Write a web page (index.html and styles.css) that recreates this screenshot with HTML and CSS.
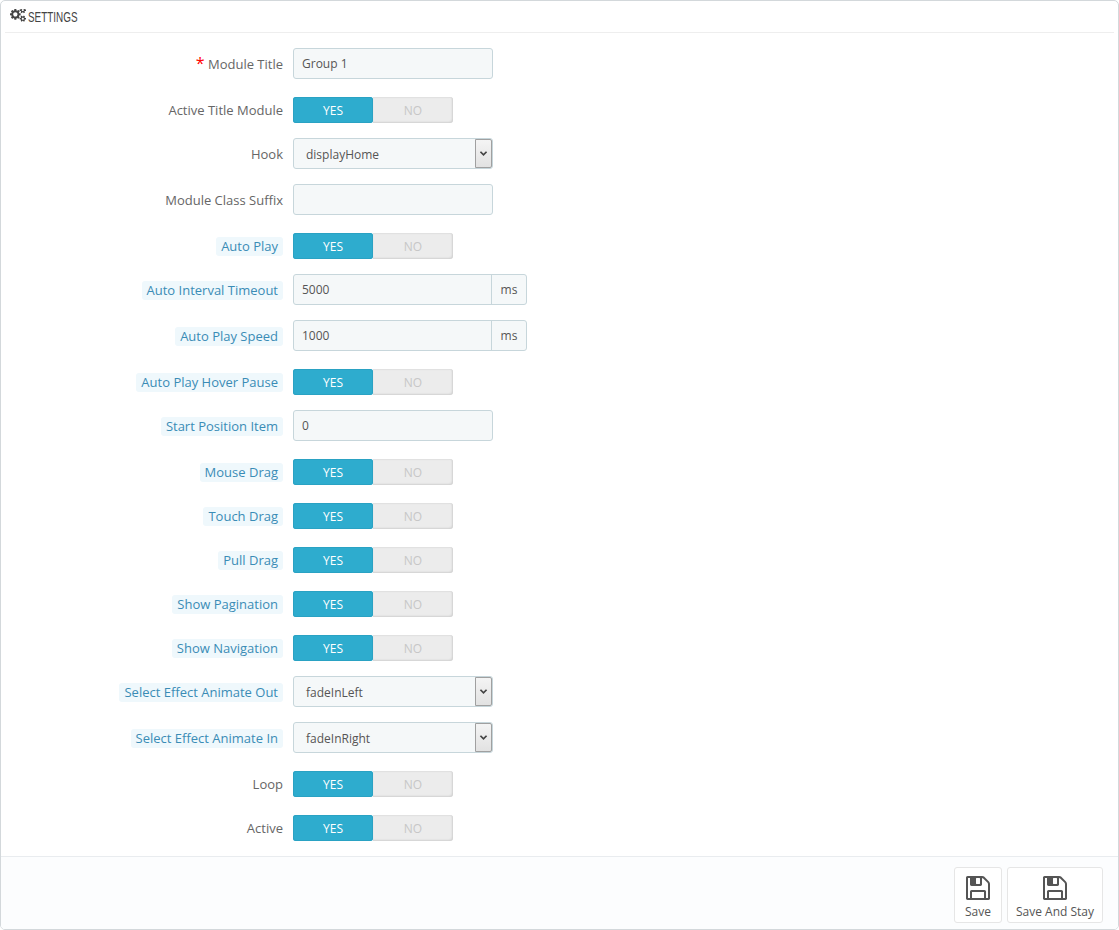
FILE: index.html
```html
<!DOCTYPE html>
<html lang="en">
<head>
<meta charset="utf-8">
<title>Settings</title>
<link rel="stylesheet" href="styles.css">
</head>
<body>
<div class="panel">
  <h3 class="panel-heading">
    <svg class="gears" viewBox="0 0 1920 1792"><path fill="currentColor" d="M896 640q0-106-75-181t-181-75-181 75-75 181 75 181 181 75 181-75 75-181zm768 512q0-52-38-90t-90-38-90 38-38 90q0 53 37.500 90.500t90.500 37.500 90.500-37.500 37.500-90.500zm0-1024q0-52-38-90t-90-38-90 38-38 90q0 53 37.500 90.500t90.500 37.500 90.500-37.500 37.500-90.500zm-384 421v185q0 10-7 19.500t-16 10.500l-155 24q-11 35-32 76 34 48 90 115 7 11 7 20 0 12-7 19-23 30-82.500 89.500t-78.500 59.500q-11 0-21-7l-115-90q-37 19-77 31-11 108-23 155-7 24-30 24h-186q-11 0-20-7.500t-10-17.500l-23-153q-34-10-75-31l-118 89q-7 7-20 7-11 0-21-8-144-133-144-160 0-9 7-19 10-14 41-53t47-61q-23-44-35-82l-152-24q-10-1-17-9.500t-7-19.500v-185q0-10 7-19.500t16-10.500l155-24q11-35 32-76-34-48-90-115-7-11-7-20 0-12 7-20 22-30 82-89t79-59q11 0 21 7l115 90q34-18 77-32 11-108 23-154 7-24 30-24h186q11 0 20 7.500t10 17.500l23 153q34 10 75 31l118-89q8-7 20-7 11 0 21 8 144 133 144 160 0 8-7 19-12 16-42 54t-45 60q23 48 34 82l152 23q10 2 17 10.500t7 19.500zm640 533v140q0 16-149 31-12 27-30 52 51 113 51 138 0 4-4 7-122 71-124 71-8 0-46-47t-52-68q-20 2-30 2t-30-2q-14 21-52 68t-46 47q-2 0-124-71-4-3-4-7 0-25 51-138-18-25-30-52-149-15-149-31v-140q0-16 149-31 13-29 30-52-51-113-51-138 0-4 4-7 4-2 35-20t59-34 30-16q8 0 46 46.500t52 67.500q20-2 30-2t30 2q51-71 92-112l6-2q4 0 124 70 4 3 4 7 0 25-51 138 17 23 30 52 149 15 149 31zm0-1024v140q0 16-149 31-12 27-30 52 51 113 51 138 0 4-4 7-122 71-124 71-8 0-46-47t-52-68q-20 2-30 2t-30-2q-14 21-52 68t-46 47q-2 0-124-71-4-3-4-7 0-25 51-138-18-25-30-52-149-15-149-31v-140q0-16 149-31 13-29 30-52-51-113-51-138 0-4 4-7 4-2 35-20t59-34 30-16q8 0 46 46.500t52 67.500q20-2 30-2t30 2q51-71 92-112l6-2q4 0 124 70 4 3 4 7 0 25-51 138 17 23 30 52 149 15 149 31z"/></svg>
    <span class="title">SETTINGS</span>
  </h3>
  <form class="form">
    <div class="row"><label class="label label-plain"><span class="req">*</span> Module Title</label><input class="input" value="Group 1"></div>
    <div class="row row-switch"><label class="label label-plain">Active Title Module</label><div class="switch"><span class="on">YES</span><span class="off">NO</span></div></div>
    <div class="row"><label class="label">Hook</label><div class="select"><span>displayHome</span><i class="arrow"><svg viewBox="0 0 10 8"><path d="M1.500 2 5 5.500 8.500 2" /></svg></i></div></div>
    <div class="row"><label class="label">Module Class Suffix</label><input class="input"></div>
    <div class="row row-switch"><label class="label"><span class="hint">Auto Play</span></label><div class="switch"><span class="on">YES</span><span class="off">NO</span></div></div>
    <div class="row"><label class="label"><span class="hint">Auto Interval Timeout</span></label><div class="group"><input class="group-input" value="5000"><span class="addon">ms</span></div></div>
    <div class="row"><label class="label"><span class="hint">Auto Play Speed</span></label><div class="group"><input class="group-input" value="1000"><span class="addon">ms</span></div></div>
    <div class="row row-switch"><label class="label"><span class="hint">Auto Play Hover Pause</span></label><div class="switch"><span class="on">YES</span><span class="off">NO</span></div></div>
    <div class="row"><label class="label"><span class="hint">Start Position Item</span></label><input class="input" value="0"></div>
    <div class="row row-switch"><label class="label"><span class="hint">Mouse Drag</span></label><div class="switch"><span class="on">YES</span><span class="off">NO</span></div></div>
    <div class="row row-switch"><label class="label"><span class="hint">Touch Drag</span></label><div class="switch"><span class="on">YES</span><span class="off">NO</span></div></div>
    <div class="row row-switch"><label class="label"><span class="hint">Pull Drag</span></label><div class="switch"><span class="on">YES</span><span class="off">NO</span></div></div>
    <div class="row row-switch"><label class="label"><span class="hint">Show Pagination</span></label><div class="switch"><span class="on">YES</span><span class="off">NO</span></div></div>
    <div class="row row-switch"><label class="label"><span class="hint">Show Navigation</span></label><div class="switch"><span class="on">YES</span><span class="off">NO</span></div></div>
    <div class="row"><label class="label"><span class="hint">Select Effect Animate Out</span></label><div class="select"><span>fadeInLeft</span><i class="arrow"><svg viewBox="0 0 10 8"><path d="M1.500 2 5 5.500 8.500 2" /></svg></i></div></div>
    <div class="row"><label class="label"><span class="hint">Select Effect Animate In</span></label><div class="select"><span>fadeInRight</span><i class="arrow"><svg viewBox="0 0 10 8"><path d="M1.500 2 5 5.500 8.500 2" /></svg></i></div></div>
    <div class="row row-switch"><label class="label label-plain">Loop</label><div class="switch"><span class="on">YES</span><span class="off">NO</span></div></div>
    <div class="row row-switch"><label class="label label-plain">Active</label><div class="switch"><span class="on">YES</span><span class="off">NO</span></div></div>
  </form>
  <div class="footer">
    <button class="btn" type="button"><svg class="save" viewBox="0 0 1792 1792"><path fill="currentColor" d="M512 1536h768v-384h-768v384zm896 0h128v-896q0-14-10-38.500t-20-34.500l-281-281q-10-10-34-20t-39-10v416q0 40-28 68t-68 28h-576q-40 0-68-28t-28-68v-416h-128v1280h128v-416q0-40 28-68t68-28h832q40 0 68 28t28 68v416zm-384-928v-320q0-13-9.500-22.500t-22.500-9.500h-192q-13 0-22.500 9.500t-9.500 22.500v320q0 13 9.500 22.500t22.500 9.500h192q13 0 22.500-9.500t9.500-22.500zm640 32v928q0 40-28 68t-68 28h-1344q-40 0-68-28t-28-68v-1344q0-40 28-68t68-28h928q40 0 88 20t76 48l280 280q28 28 48 76t20 88z"/></svg><span>Save</span></button>
    <button class="btn" type="button"><svg class="save" viewBox="0 0 1792 1792"><path fill="currentColor" d="M512 1536h768v-384h-768v384zm896 0h128v-896q0-14-10-38.500t-20-34.500l-281-281q-10-10-34-20t-39-10v416q0 40-28 68t-68 28h-576q-40 0-68-28t-28-68v-416h-128v1280h128v-416q0-40 28-68t68-28h832q40 0 68 28t28 68v416zm-384-928v-320q0-13-9.500-22.500t-22.500-9.500h-192q-13 0-22.500 9.500t-9.500 22.500v320q0 13 9.500 22.500t22.500 9.500h192q13 0 22.500-9.500t9.500-22.500zm640 32v928q0 40-28 68t-68 28h-1344q-40 0-68-28t-28-68v-1344q0-40 28-68t68-28h928q40 0 88 20t76 48l280 280q28 28 48 76t20 88z"/></svg><span>Save And Stay</span></button>
  </div>
</div>
</body>
</html>
```
FILE: styles.css
```css
* { box-sizing: border-box; }
html, body { margin: 0; padding: 0; background: #fff; }
body { font-family: "Open Sans", sans-serif; font-size: 13px; color: #666; }
.panel { width: 1119px; height: 930px; background: #fff; border: 1px solid #d3d8db; border-radius: 5px; display: flex; flex-direction: column; overflow: hidden; }
.panel-heading { height: 32px; margin: 0 4px; padding: 0 0 0 5px; border-bottom: 1px solid #eee; display: flex; align-items: center; gap: 2px; font-family: "Liberation Sans", sans-serif; font-weight: 400; font-size: 15px; color: #444; }
.title { display: inline-block; transform: scaleX(0.66); transform-origin: left center; }
.gears { width: 16px; height: 15px; color: #444; }
.form { padding-top: 15px; flex: 1; }
.row { display: flex; align-items: center; margin-bottom: 15px; gap: 10px; }
.row-switch { padding-top: 3px; }
.label { width: 282px; text-align: right; line-height: 18px; padding-top: 1px; }
.label-plain { padding-top: 0; }
.req { color: #f00; font-size: 16px; line-height: 0; }
.hint { display: inline-block; background: #eff8fc; color: #3a8cb6; padding: 0 5px 1px; border-radius: 3px; line-height: 18px; }
.input, .select, .group { height: 31px; border: 1px solid #c7d6db; border-radius: 3px; background: #f5f8f9; font-family: inherit; font-size: 12px; color: #555; }
.input { width: 200px; padding: 0 8px; outline: 0; }
.switch { display: flex; width: 160px; height: 26px; line-height: 27px; border-radius: 3px; text-align: center; font-size: 12px; }
.on { width: 80px; background: #2eacce; color: #fff; border-radius: 3px; box-shadow: inset 0 0 0 1px #2aa2c3; }
.off { width: 80px; background: #ececec; color: #c7c7c7; border-radius: 0 3px 3px 0; box-shadow: inset -1px -1px 2px #d0d0d0, inset 0 1px 1px #e2e2e2; }
.select { width: 200px; display: flex; align-items: center; justify-content: space-between; padding: 1px 0 0 12px; font-size: 12px; }
.arrow { width: 17px; height: 29px; margin: -1px 0 0; display: flex; align-items: center; justify-content: center; background: linear-gradient(#f4f4f4, #e2e2e2); border: 1px solid #a0a0a0; border-radius: 0 2px 2px 0; }
.arrow svg { width: 9px; height: 7px; fill: none; stroke: #444; stroke-width: 2; }
.group { width: 234px; display: flex; }
.group-input { flex: 1; min-width: 0; border: 0; background: none; padding: 0 8px; font: inherit; color: inherit; outline: 0; }
.addon { width: 35px; border-left: 1px solid #c7d6db; text-align: center; line-height: 29px; font-size: 12px; }
.footer { height: 73px; background: #fcfdfe; border-top: 1px solid #e9ecef; padding: 10px 15px 0 0; display: flex; justify-content: flex-end; gap: 5px; }
.btn { height: 56px; min-width: 48px; padding: 6px 8px 0; border: 1px solid #e6e6e6; border-radius: 3px; background: #fff; color: #555; font-family: "Open Sans", sans-serif; font-size: 12px; display: flex; flex-direction: column; align-items: center; line-height: 19px; }
.save { width: 28px; height: 28px; display: block; color: #555; }
```
